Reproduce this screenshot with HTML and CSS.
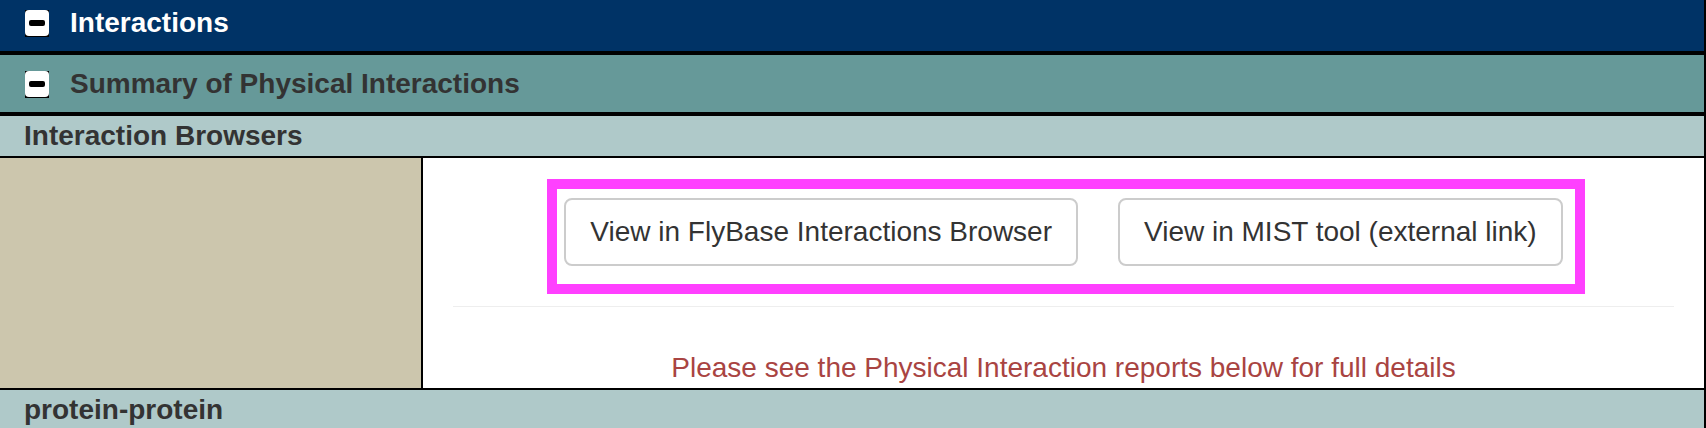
FILE: index.html
```html
<!DOCTYPE html>
<html lang="en">
<head>
<meta charset="utf-8">
<title>Interactions</title>
<link rel="stylesheet" href="styles.css">
</head>
<body>
<div class="panel">
  <div class="section-head">
    <svg class="toggle" width="24" height="27" viewBox="0 0 24 27" aria-hidden="true"><rect width="24" height="27" fill="#000"/><rect x="0" y="0" width="24" height="26" rx="4" fill="#fff"/><rect x="4" y="10" width="16" height="6" rx="2" fill="#000"/></svg>
    <span class="section-title">Interactions</span>
  </div>
  <div class="sub-head">
    <svg class="toggle" width="24" height="27" viewBox="0 0 24 27" aria-hidden="true"><rect width="24" height="27" fill="#000"/><rect x="0" y="0" width="24" height="26" rx="4" fill="#fff"/><rect x="4" y="10" width="16" height="6" rx="2" fill="#000"/></svg>
    <span class="sub-title">Summary of Physical Interactions</span>
  </div>
  <div class="row-label">Interaction Browsers</div>
  <div class="content-row">
    <div class="side-cell"></div>
    <div class="main-cell">
      <div class="btn-wrap">
        <div class="btn-group">
          <a class="btn">View in FlyBase Interactions Browser</a>
          <a class="btn">View in MIST tool (external link)</a>
        </div>
      </div>
      <hr class="divider">
      <p class="note">Please see the Physical Interaction reports below for full details</p>
    </div>
  </div>
  <div class="row-label row-last">protein-protein</div>
</div>
</body>
</html>
```

FILE: styles.css
```css
html, body {
  margin: 0;
  padding: 0;
  overflow: hidden;
  background: #fff;
}

body {
  font-family: "Liberation Sans", Arial, Helvetica, sans-serif;
  font-size: 28px;
  line-height: 32px;
  color: #333;
}

.panel {
  border-right: 2px solid #000;
}

.section-head {
  display: flex;
  align-items: center;
  height: 32px;
  padding: 7px 0 12px 25px;
  background: #003366;
  border-bottom: 4px solid #000;
}

.sub-head {
  display: flex;
  align-items: center;
  height: 32px;
  padding: 13px 0 12px 25px;
  background: #669999;
  border-bottom: 4px solid #000;
}

.toggle {
  display: block;
  flex: none;
}

.section-title {
  margin-left: 21px;
  font-weight: bold;
  color: #fff;
}

.sub-title {
  margin-left: 21px;
  font-weight: bold;
  color: #333;
}

.row-label {
  padding: 4px 0 4px 24px;
  background: #afc9c9;
  font-weight: bold;
  color: #333;
  border-bottom: 2px solid #000;
}

.row-last {
  border-bottom: none;
}

.content-row {
  display: grid;
  grid-template-columns: 423px 1fr;
  border-bottom: 2px solid #000;
}

.side-cell {
  background: #ccc6ad;
  border-right: 2px solid #000;
}

.main-cell {
  padding: 40px 30px 0;
  background: #fff;
}

.btn-wrap {
  display: flex;
  justify-content: center;
}

.btn-group {
  position: relative;
  display: flex;
  gap: 40px;
}

.btn-group::after {
  content: "";
  position: absolute;
  top: -19px;
  right: -22px;
  bottom: -28px;
  left: -17px;
  border: 10px solid #ff40ff;
  pointer-events: none;
}

.btn {
  display: block;
  padding: 12px 24px;
  border: 2px solid #ccc;
  border-radius: 8px;
  background: #fff;
  color: #333;
  font-size: 28px;
  line-height: 40px;
  white-space: nowrap;
  text-decoration: none;
}

.divider {
  margin: 40px 0 0;
  border: 0;
  border-top: 1px solid #eee;
  height: 0;
}

.note {
  margin: 41px 0 0;
  line-height: 40px;
  text-align: center;
  color: #a94442;
}
```
